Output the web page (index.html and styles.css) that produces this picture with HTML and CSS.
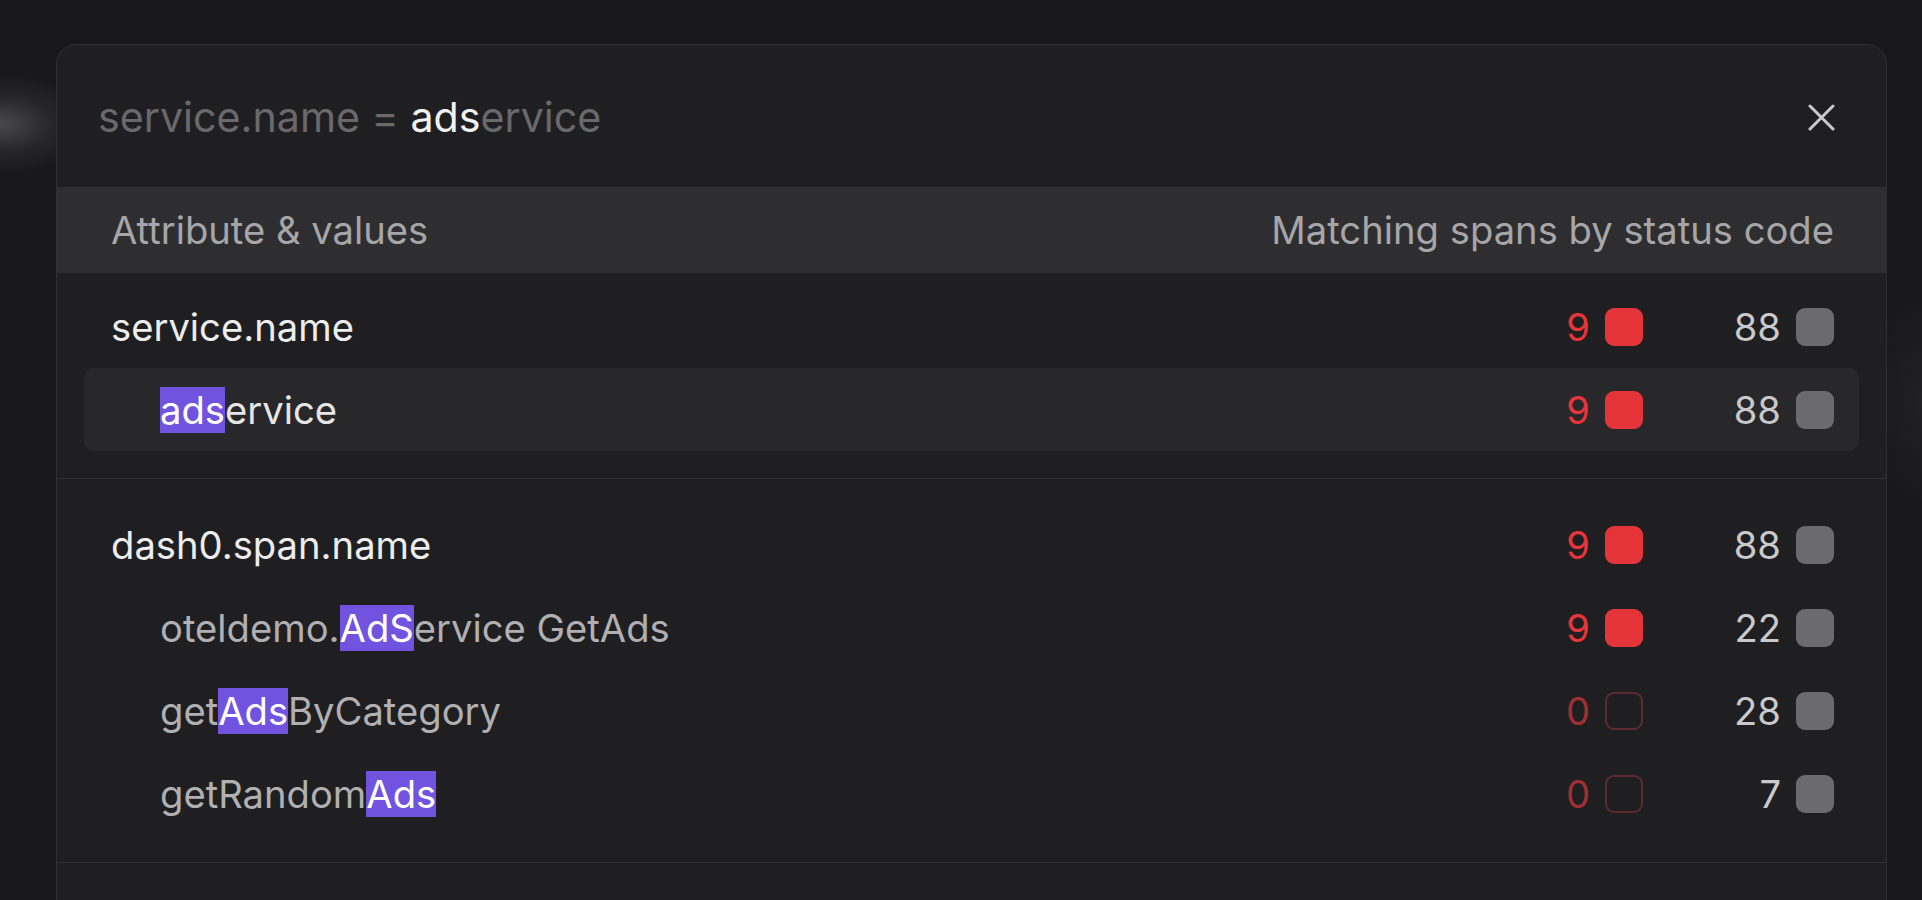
FILE: index.html
```html
<!DOCTYPE html>
<html lang="en">
<head>
<meta charset="utf-8">
<title>Attribute filter</title>
<link rel="stylesheet" href="styles.css">
</head>
<body>
<div class="page">
  <div class="modal">
    <div class="modal-head">
      <div class="query"><span class="dim">service.name = </span><span class="typed">ads</span><span class="dim">ervice</span></div>
      <button class="close" aria-label="Close">
        <svg viewBox="0 0 27 27" width="27" height="27"><path d="M2 2 L25 25 M25 2 L2 25" stroke="currentColor" stroke-width="3" stroke-linecap="round" fill="none"/></svg>
      </button>
    </div>
    <div class="table-head">
      <span>Attribute &amp; values</span>
      <span>Matching spans by status code</span>
    </div>

    <div class="group first">
      <div class="row attr">
        <span class="label">service.name</span>
        <div class="counts">
          <span class="count err">9<i class="sq"></i></span>
          <span class="count ok">88<i class="sq"></i></span>
        </div>
      </div>
      <div class="row value selected">
        <span class="label"><mark>ads</mark>ervice</span>
        <div class="counts">
          <span class="count err">9<i class="sq"></i></span>
          <span class="count ok">88<i class="sq"></i></span>
        </div>
      </div>
    </div>

    <div class="group">
      <div class="row attr">
        <span class="label">dash0.span.name</span>
        <div class="counts">
          <span class="count err">9<i class="sq"></i></span>
          <span class="count ok">88<i class="sq"></i></span>
        </div>
      </div>
      <div class="row value">
        <span class="label">oteldemo.<mark>AdS</mark>ervice GetAds</span>
        <div class="counts">
          <span class="count err">9<i class="sq"></i></span>
          <span class="count ok">22<i class="sq"></i></span>
        </div>
      </div>
      <div class="row value">
        <span class="label">get<mark>Ads</mark>ByCategory</span>
        <div class="counts">
          <span class="count err zero">0<i class="sq"></i></span>
          <span class="count ok">28<i class="sq"></i></span>
        </div>
      </div>
      <div class="row value">
        <span class="label">getRandom<mark>Ads</mark></span>
        <div class="counts">
          <span class="count err zero">0<i class="sq"></i></span>
          <span class="count ok">7<i class="sq"></i></span>
        </div>
      </div>
    </div>

    <div class="group tail"></div>
  </div>
</div>
</body>
</html>
```

FILE: styles.css
```css
* { box-sizing: border-box; }

html, body {
  margin: 0;
  height: 900px;
  overflow: hidden;
}

body {
  background:
    radial-gradient(ellipse 120px 62px at 0 124px, rgba(78, 78, 80, 0.9), rgba(55, 55, 57, 0.45) 45%, rgba(30, 30, 32, 0.1) 80%, transparent 100%),
    radial-gradient(ellipse 60px 120px at 1922px 400px, rgba(50, 50, 52, 0.35), transparent 100%),
    #18181a;
  font-family: Inter, "Noto Sans", sans-serif;
  color: #ececec;
}

.page {
  padding: 44px 35px 0 56px;
}

.modal {
  width: 1831px;
  height: 900px;
  background: #1f1f21;
  border: 1px solid #303032;
  border-radius: 20px;
  overflow: hidden;
}

.modal-head {
  display: flex;
  align-items: center;
  justify-content: space-between;
  height: 142px;
  padding: 2px 51px 0 41px;
}

.query {
  font-size: 41.2px;
  line-height: 50px;
}

.query .dim { color: #69696c; }
.query .typed { color: #f2f2f2; }

.close {
  display: flex;
  padding: 0;
  border: 0;
  background: none;
  color: #cacaca;
}

.table-head {
  display: flex;
  align-items: center;
  justify-content: space-between;
  height: 86px;
  padding: 0 52px 0 54px;
  background: #2e2e30;
  color: #a6a6a8;
  font-size: 38.2px;
}

.group {
  padding: 24px 27px 27px;
  border-bottom: 1px solid #303032;
}

.group.first { padding-top: 12px; }
.group.tail { border-bottom: 0; }

.row {
  display: flex;
  align-items: center;
  justify-content: space-between;
  height: 83px;
  padding: 0 25px 0 27px;
  font-size: 38.2px;
  border-radius: 10px;
}

.row.attr .label { color: #ededed; }

.row.value { padding-left: 76px; }
.row.value .label { color: #b0b0b2; }
.row.value.selected { background: #28282a; }
.row.value.selected .label { color: #e6e6e6; }

mark {
  background: #7153e0;
  color: #ffffff;
}

.counts {
  display: flex;
}

.count {
  display: flex;
  align-items: center;
  justify-content: flex-end;
  gap: 15px;
  width: 191px;
}

.sq {
  display: block;
  width: 38px;
  height: 38px;
  border-radius: 9px;
}

.count.err { color: #e8343b; }
.count.err .sq { background: #e4343a; }

.count.err.zero { color: #a02f34; }
.count.err.zero .sq {
  background: transparent;
  border: 2px solid #5e2a2e;
}

.count.ok { color: #c9c9cb; }
.count.ok .sq { background: #6b6b6d; }
```
